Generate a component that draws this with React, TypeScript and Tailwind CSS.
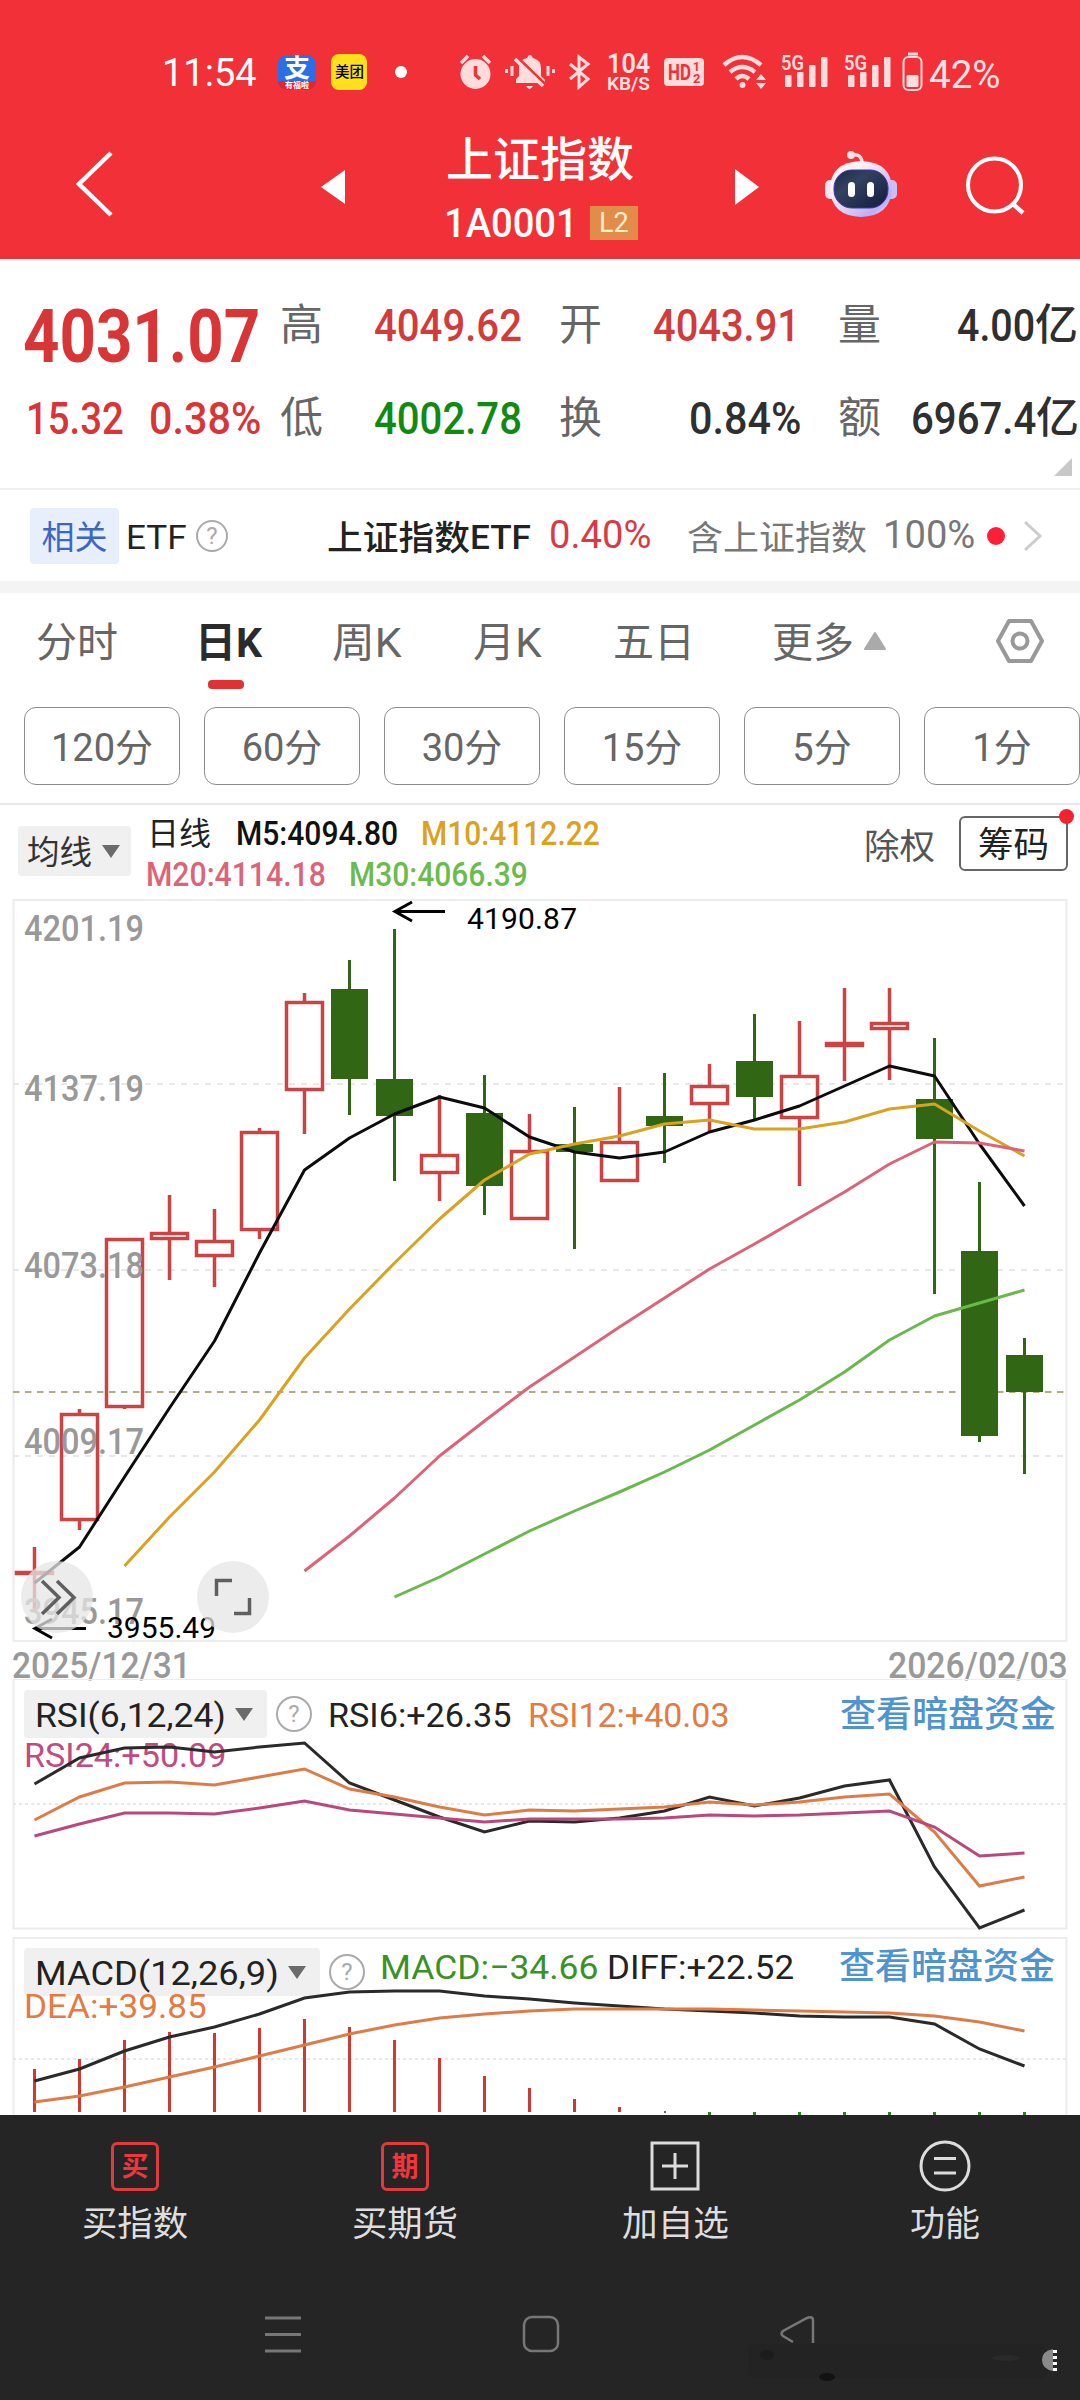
import React, { useLayoutEffect, useRef, useState } from "react";
import clsx from "clsx";

interface FitProps {
  w: number;
  className?: string;
  children: React.ReactNode;
}

// Squeezes a single line of text into a fixed width
const Fit: React.FC<FitProps> = ({ w, className, children }) => {
  const ref = useRef<HTMLSpanElement>(null);
  const [scale, setScale] = useState(1);

  useLayoutEffect(() => {
    if (ref.current) {
      setScale(w / ref.current.offsetWidth);
    }
  }, [w]);

  return (
    <span className={clsx("block shrink-0 leading-none", className)} style={{ width: w }}>
      <span
        ref={ref}
        className="inline-block origin-left whitespace-nowrap leading-none"
        style={{ transform: `scaleX(${scale})` }}
      >
        {children}
      </span>
    </span>
  );
};

const START_X = 34.5;
const STEP = 45;
const xAt = (i: number) => START_X + i * STEP;

const toPoints = (ys: number[], from = 0) =>
  ys.map((y, i) => `${xAt(i + from)},${y}`).join(" ");

type Candle = [up: boolean, high: number, top: number, bottom: number, low: number];

const candles: Candle[] = [
  [true, 1547, 1571, 1575, 1612],
  [true, 1409, 1413, 1521, 1530],
  [true, 1238, 1238, 1408, 1409],
  [true, 1195, 1232, 1240, 1280],
  [true, 1209, 1240, 1257, 1287],
  [true, 1128, 1131, 1231, 1239],
  [true, 993, 1001, 1091, 1134],
  [false, 960, 989, 1079, 1115],
  [false, 929, 1079, 1116, 1181],
  [true, 1095, 1154, 1174, 1201],
  [false, 1075, 1113, 1186, 1215],
  [true, 1114, 1150, 1220, 1220],
  [false, 1107, 1144, 1152, 1249],
  [true, 1087, 1141, 1182, 1182],
  [false, 1073, 1116, 1126, 1163],
  [true, 1064, 1085, 1105, 1131],
  [false, 1014, 1061, 1097, 1120],
  [true, 1021, 1075, 1119, 1186],
  [true, 988, 1042, 1047, 1081],
  [true, 988, 1022, 1030, 1080],
  [false, 1038, 1099, 1139, 1294],
  [false, 1182, 1251, 1436, 1442],
  [false, 1338, 1355, 1392, 1474],
];

const ma5 = [1583, 1547, 1477, 1408, 1341, 1253, 1170, 1138, 1114, 1097, 1108, 1137, 1152, 1158, 1152, 1132, 1120, 1106, 1086, 1066, 1076, 1144, 1206];
const ma10 = [1566, 1517, 1472, 1420, 1358, 1309, 1263, 1219, 1180, 1154, 1144, 1136, 1124, 1120, 1129, 1129, 1122, 1109, 1104, 1131, 1156];
const ma20 = [1571, 1536, 1498, 1456, 1421, 1387, 1357, 1327, 1298, 1269, 1244, 1218, 1192, 1164, 1142, 1143, 1151];
const ma30 = [1597, 1577, 1554, 1531, 1511, 1492, 1472, 1450, 1425, 1400, 1372, 1340, 1316, 1303, 1290];

const rsi6 = [1784, 1758, 1748, 1747, 1752, 1747, 1743, 1783, 1800, 1817, 1832, 1821, 1822, 1818, 1811, 1797, 1806, 1798, 1786, 1780, 1867, 1928, 1910];
const rsi12 = [1820, 1797, 1783, 1782, 1785, 1777, 1769, 1789, 1797, 1807, 1815, 1810, 1811, 1809, 1807, 1802, 1805, 1802, 1797, 1794, 1832, 1886, 1877];
const rsi24 = [1836, 1824, 1813, 1813, 1814, 1808, 1801, 1810, 1814, 1818, 1822, 1819, 1819, 1819, 1818, 1815, 1816, 1815, 1813, 1811, 1827, 1856, 1853];

const diff = [2081, 2069, 2051, 2037, 2027, 2014, 1998, 1992, 1991, 1991, 1996, 1999, 2003, 2006, 2009, 2011, 2013, 2016, 2017, 2017, 2024, 2049, 2066];
const dea = [2102, 2096, 2087, 2077, 2067, 2056, 2045, 2034, 2025, 2018, 2014, 2011, 2009, 2009, 2009, 2009, 2010, 2011, 2012, 2013, 2016, 2022, 2031];
const macdBars = [2069, 2059, 2040, 2032, 2033, 2028, 2019, 2027, 2040, 2058, 2076, 2088, 2099, 2107];

const priceLabels: [string, number][] = [
  ["4201.19", 941],
  ["4137.19", 1101],
  ["4073.18", 1278],
  ["4009.17", 1454],
  ["3945.17", 1624],
];

const Signal: React.FC<{ className?: string }> = ({ className }) => (
  <svg width="48" height="40" viewBox="0 0 48 40" className={className} fill="#ffdcdc">
    <text x="0" y="18" fontSize="21" fontWeight="600" textLength="23" lengthAdjust="spacingAndGlyphs">
      5G
    </text>
    <rect x="4" y="23" width="6.500" height="12" rx="1" />
    <rect x="16" y="20" width="6.500" height="15" rx="1" />
    <rect x="28" y="13" width="6.500" height="22" rx="1" />
    <rect x="40" y="5" width="6.500" height="30" rx="1" />
  </svg>
);

const StatusBar = () => (
  <div className="flex h-10 items-center text-[#ffe3e3]">
    <Fit w={95} className="ml-[162px] mt-[2px] text-[38px] text-white">11:54</Fit>
    <div className="ml-[21px] flex h-[35px] w-[38px] flex-col items-center overflow-hidden rounded-[9px] bg-[#2a6fe8] text-white">
      <span className="mt-px text-[26px] font-bold leading-[25px]">支</span>
      <span className="w-full bg-[#e5252b] text-center text-[8px] font-bold leading-[10px]">有福啦</span>
    </div>
    <div className="ml-[15px] flex size-9 items-center justify-center rounded-lg bg-[#ffe01a]">
      <Fit w={29} className="text-[15px] font-medium text-black">美团</Fit>
    </div>
    <div className="ml-[28px] size-3 rounded-full bg-white" />
    <svg width="32" height="36" viewBox="0 0 32 36" className="ml-[53px]" fill="#ffdcdc">
      <circle cx="15.500" cy="20" r="15" />
      <path d="M1 9 8 2M30 9 23 2" stroke="#ffdcdc" strokeWidth="3.500" />
      <path d="M15.500 12V21L20 25" stroke="#f23037" strokeWidth="3.500" fill="none" />
    </svg>
    <svg width="50" height="36" viewBox="0 0 50 36" className="ml-[13px]" fill="#ffdcdc">
      <path d="M11 29V25L14 22V13Q15 5 22 4Q23 1 25 1T28 4Q36 6 36 14V22L40 26V29ZM21 32H28Q26 35 24.500 35T21 32" />
      <path d="M11 2 41 31" stroke="#f23037" strokeWidth="3" />
      <path d="M10 5 38 32" stroke="#ffdcdc" strokeWidth="3.500" />
      <path d="M7 12V22M43 12V22M1.500 15V19M48.500 15V19" stroke="#ffdcdc" strokeWidth="3" />
    </svg>
    <svg width="24" height="36" viewBox="0 0 24 36" className="ml-[13px]" fill="none" stroke="#ffdcdc" strokeWidth="3">
      <path d="M2 10 20 25 11 33V3L20 10 2 25" />
    </svg>
    <div className="ml-[15px] flex flex-col gap-px font-semibold">
      <Fit w={43} className="text-[27px]">104</Fit>
      <Fit w={43} className="mt-[-5px] text-[19px]">KB/S</Fit>
    </div>
    <svg width="40" height="28" viewBox="0 0 40 28" className="ml-[14px]" fill="#f23037" fontWeight="700">
      <rect width="40" height="28" rx="4" fill="#ffdcdc" />
      <text x="4" y="22" fontSize="22" textLength="23" lengthAdjust="spacingAndGlyphs">HD</text>
      <text x="29" y="13" fontSize="12">1</text>
      <text x="29" y="25" fontSize="13">2</text>
    </svg>
    <svg width="46" height="36" viewBox="0 0 46 36" className="ml-[18px]" fill="none" stroke="#ffdcdc" strokeWidth="4.500">
      <path d="M2 11Q20-5 39 11M8 18Q20 8 33 18M14 25Q20 19 27 25" />
      <circle cx="20.500" cy="31" r="3" fill="#ffdcdc" stroke="none" />
      <path d="M39 20 44 26H34ZM39 35 44 29H34Z" fill="#ffdcdc" stroke="none" />
    </svg>
    <Signal className="ml-[13px]" />
    <Signal className="ml-[15px]" />
    <svg width="22" height="40" viewBox="0 0 22 40" className="ml-[10px]" fill="none" stroke="#ffdcdc" strokeWidth="2">
      <path d="M6 2H16" strokeWidth="3" />
      <rect x="1.500" y="5" width="18" height="33" rx="5" />
      <rect x="4.500" y="23" width="12" height="12" rx="1.500" fill="#ffdcdc" stroke="none" />
    </svg>
    <Fit w={72} className="ml-[5px] mt-[5px] text-[38px]">42%</Fit>
  </div>
);

const Robot = () => (
  <svg width="74" height="68" viewBox="0 0 74 68" className="ml-[65px]">
    <defs>
      <linearGradient id="shell" x1="0" y1="0" x2="1" y2="1">
        <stop offset="0.3" stopColor="#fff0f4" />
        <stop offset="0.8" stopColor="#bcaef5" />
        <stop offset="1" stopColor="#f4e6fb" />
      </linearGradient>
      <linearGradient id="visor" x1="0" y1="0" x2="1" y2="1">
        <stop offset="0" stopColor="#1c2747" />
        <stop offset="0.35" stopColor="#33415f" />
        <stop offset="1" stopColor="#131c3d" />
      </linearGradient>
    </defs>
    <path d="M28 5Q38 3 38 14" fill="none" stroke="#ffe2e4" strokeWidth="3.500" />
    <circle cx="27" cy="5" r="4" fill="#ffe2e4" />
    <rect x="1" y="30" width="12" height="19" rx="5" fill="#f8e3f0" />
    <rect x="61" y="30" width="12" height="19" rx="5" fill="#cdbdf2" />
    <path d="M37 11Q68 12 68 40 66 66 37 67 8 66 6 40 6 12 37 11Z" fill="url(#shell)" />
    <rect x="10" y="20" width="54" height="38" rx="18" fill="url(#visor)" stroke="#3c35b0" strokeWidth="1" />
    <rect x="24" y="32" width="7" height="15" rx="3.500" fill="#fff" />
    <rect x="43" y="32" width="7" height="15" rx="3.500" fill="#fff" />
  </svg>
);

const Header = () => (
  <header className="h-[259px] bg-[#f23037] pt-[52px]">
    <StatusBar />
    <div className="mt-8 flex h-[132px] items-center text-white">
      <svg width="40" height="66" viewBox="0 0 40 66" className="mb-3 ml-[74px]" fill="none" stroke="#fff" strokeWidth="4.500">
        <path d="M37 2 5 33 37 64" />
      </svg>
      <svg width="24" height="34" viewBox="0 0 24 34" className="mb-1.5 ml-[207px]">
        <path d="M24 0V34L0 17Z" fill="#fff" />
      </svg>
      <div className="ml-[75px] flex w-[240px] flex-col items-center">
        <div className="flex h-[66px] items-center">
          <Fit w={188} className="mt-[4px] text-[47px] font-medium">上证指数</Fit>
        </div>
        <div className="flex h-[66px] items-center">
          <Fit w={134} className="ml-[2px] text-[41px] font-medium">1A0001</Fit>
          <div className="ml-[12px] flex h-[34px] w-12 items-center justify-center bg-[#e28c4a] text-[#ffeecb]">
            <Fit w={30} className="text-[28px]">L2</Fit>
          </div>
        </div>
      </div>
      <svg width="24" height="36" viewBox="0 0 24 36" className="mb-1.5 ml-[75px]">
        <path d="M0 0V36L24 18Z" fill="#fff" />
      </svg>
      <div className="mb-3">
        <Robot />
      </div>
      <svg width="62" height="62" viewBox="0 0 62 62" className="mb-2 ml-[66px]" fill="none" stroke="#fff" strokeWidth="4">
        <circle cx="30.500" cy="30" r="26.500" />
        <path d="M49 49 59 58" strokeWidth="4.500" />
      </svg>
    </div>
  </header>
);

const Quote = () => (
  <section className="relative h-[231px] border-b-2 border-[#f0f0f0] font-medium">
    <div className="flex pl-[23px] pt-[41px]">
      <div className="w-[257px] text-[#d83536]">
        <Fit w={237} className="text-[74px] font-bold">4031.07</Fit>
        <div className="mt-[22px] flex text-[45px]">
          <Fit w={98} className="ml-[3px]">15.32</Fit>
          <Fit w={112} className="ml-[25px]">0.38%</Fit>
        </div>
      </div>
      <div className="flex flex-col gap-[49px] pt-[3px] text-[43px]">
        <div className="flex h-[44px] items-center text-[#2f2f2f]">
          <Fit w={43} className="font-normal text-[#666]">高</Fit>
          <Fit w={148} className="ml-[51px] text-[45px] text-[#d23b3b]">4049.62</Fit>
          <Fit w={43} className="ml-[37px] font-normal text-[#666]">开</Fit>
          <Fit w={147} className="ml-[51px] text-[45px] text-[#d23b3b]">4043.91</Fit>
          <Fit w={43} className="ml-[38px] font-normal text-[#666]">量</Fit>
          <Fit w={78} className="ml-[76px] text-[45px]">4.00</Fit>
          <Fit w={43}>亿</Fit>
        </div>
        <div className="flex h-[44px] items-center text-[#2f2f2f]">
          <Fit w={43} className="font-normal text-[#666]">低</Fit>
          <Fit w={148} className="ml-[51px] text-[45px] text-[#118a11]">4002.78</Fit>
          <Fit w={43} className="ml-[37px] font-normal text-[#666]">换</Fit>
          <Fit w={112} className="ml-[87px] text-[45px]">0.84%</Fit>
          <Fit w={43} className="ml-[37px] font-normal text-[#666]">额</Fit>
          <Fit w={125} className="ml-[30px] text-[45px]">6967.4</Fit>
          <Fit w={43}>亿</Fit>
        </div>
      </div>
    </div>
    <svg width="18" height="18" viewBox="0 0 18 18" className="absolute bottom-[12px] right-[8px]">
      <path d="M18 0V18H0Z" fill="#c8c8c8" />
    </svg>
  </section>
);

const Help: React.FC<{ size: number; className?: string }> = ({ size, className }) => (
  <div
    className={clsx("flex shrink-0 items-center justify-center rounded-full border-2 border-[#aaa] text-[24px] leading-none text-[#aaa]", className)}
    style={{ width: size, height: size }}
  >
    ?
  </div>
);

const EtfRow = () => (
  <section className="flex h-[91px] items-center text-[34px]">
    <div className="ml-[30px] mt-px flex h-[56px] w-[89px] items-center justify-center rounded bg-[#e7eefc] text-[#3d66c2]">
      <Fit w={66} className="mt-[2px] text-[33px]">相关</Fit>
    </div>
    <Fit w={61} className="ml-[7px] mt-[3px] text-[#222]">ETF</Fit>
    <Help size={32} className="ml-[9px] mt-[1px]" />
    <Fit w={143} className="ml-[99px] mt-[5px] font-medium text-[#222]">上证指数</Fit>
    <Fit w={61} className="mt-[3px] font-medium text-[#222]">ETF</Fit>
    <Fit w={103} className="ml-[18px] text-[39px] text-[#d93a45]">0.40%</Fit>
    <Fit w={180} className="ml-[35px] mt-[4px] text-[#777]">含上证指数</Fit>
    <Fit w={92} className="ml-[16px] text-[39px] text-[#777]">100%</Fit>
    <div className="ml-[12px] size-[18px] rounded-full bg-[#ff2037]" />
    <svg width="20" height="32" viewBox="0 0 20 32" className="ml-[18px]" fill="none" stroke="#ccc" strokeWidth="3">
      <path d="M2 2 17 16 2 30" />
    </svg>
  </section>
);

const periods = ["120分", "60分", "30分", "15分", "5分", "1分"];

const Tabs = () => (
  <section className="h-[212px] border-b-2 border-[#e8e8e8] text-[#666]">
    <div className="flex h-[114px] pt-[30px] text-[41px]">
      <Fit w={82} className="ml-[36px]">分时</Fit>
      <div className="ml-[77px] w-[67px]">
        <Fit w={67} className="font-bold text-[#2b2b2b]">日K</Fit>
        <div className="ml-[13px] mt-[16px] h-[9px] w-9 rounded bg-[#df3333]" />
      </div>
      <Fit w={70} className="ml-[70px]">周K</Fit>
      <Fit w={69} className="ml-[71px]">月K</Fit>
      <Fit w={82} className="ml-[71px]">五日</Fit>
      <Fit w={82} className="ml-[77px]">更多</Fit>
      <svg width="22" height="18" viewBox="0 0 22 18" className="ml-[10px] mt-[9px]">
        <path d="M11 1 21 17H1Z" fill="#aaa" stroke="#aaa" strokeLinejoin="round" strokeWidth="2" />
      </svg>
      <svg width="50" height="46" viewBox="0 0 50 46" className="ml-[109px] mt-[-5px]" fill="none" stroke="#999" strokeWidth="4" strokeLinejoin="round">
        <path d="M14 3H36L47 23 36 43H14L3 23Z" />
        <circle cx="25" cy="23" r="7.500" />
      </svg>
    </div>
    <div className="flex gap-6 pl-6">
      {periods.map((label) => (
        <div
          key={label}
          className="flex h-[78px] w-[156px] shrink-0 items-center justify-center rounded-xl border border-[#8c8c8c] pt-[3px] text-[38px] leading-none"
        >
          {label}
        </div>
      ))}
    </div>
  </section>
);

const Caret = ({ className }: { className?: string }) => (
  <svg width="18" height="13" viewBox="0 0 18 13" className={className}>
    <path d="M0 0H18L9 13Z" fill="#6b6b6b" />
  </svg>
);

const Legend = () => (
  <section className="flex h-[94px]">
    <div className="ml-[18px] mt-[21px] flex h-[50px] w-[113px] items-center rounded bg-[#f0f0f0] pl-[9px] text-[#333]">
      <Fit w={65} className="mt-[2px] text-[33px]">均线</Fit>
      <Caret className="ml-[10px]" />
    </div>
    <div className="ml-[15px] w-[600px] pt-[12px] text-[33px] font-medium">
      <div className="flex h-[32px] items-center">
        <Fit w={64} className="ml-px mt-px text-[32px] font-normal text-[#222]">日线</Fit>
        <Fit w={162} className="ml-[25px] text-[#111]">M5:4094.80</Fit>
        <Fit w={179} className="ml-[23px] text-[#dba21f]">M10:4112.22</Fit>
      </div>
      <div className="mt-[8px] flex h-[34px] items-center">
        <Fit w={180} className="text-[#dd6478]">M20:4114.18</Fit>
        <Fit w={179} className="ml-[23px] text-[#6cbb4e]">M30:4066.39</Fit>
      </div>
    </div>
    <Fit w={71} className="ml-[118px] mt-[25px] text-[35px] text-[#555]">除权</Fit>
    <div className="relative ml-[24px] mt-[11px] flex h-[55px] w-[109px] items-center justify-center rounded-md border-2 border-[#666] text-[#222]">
      <Fit w={71} className="mt-[3px] text-[35px]">筹码</Fit>
      <div className="absolute right-[-8px] top-[-9px] size-[15px] rounded-full bg-[#f5222d]" />
    </div>
  </section>
);

const KLineChart = () => (
  <svg width="1080" height="743" viewBox="0 899 1080 743" className="block" fill="none">
    <rect x="13.500" y="900" width="1053" height="741" stroke="#ececec" strokeWidth="2" />
    <g stroke="#e8e8e8" strokeWidth="2" strokeDasharray="6 6">
      <path d="M13 1084H1066M13 1270H1066M13 1456H1066" />
    </g>
    <path d="M13 1392H1066" stroke="#b3ab84" strokeWidth="2" strokeDasharray="6.500 5.500" />
    {candles.map(([up, high, top, bottom, low], i) => {
      const x = xAt(i);
      return up ? (
        <g key={i} stroke="#cb4343" strokeWidth="3.500">
          <path d={`M${x} ${high}V${top}M${x} ${bottom}V${low}`} />
          <rect x={x - 18} y={top + 1.5} width="36" height={Math.max(bottom - top - 3, 1)} />
        </g>
      ) : (
        <g key={i} fill="#306614">
          <rect x={x - 1.5} y={high} width="3" height={low - high} />
          <rect x={x - 18.5} y={top} width="37" height={bottom - top} />
        </g>
      );
    })}
    <g strokeWidth="3" strokeLinejoin="round">
      <polyline points={toPoints(ma5)} stroke="#0c0c0c" />
      <polyline points={toPoints(ma10, 2)} stroke="#d9a220" />
      <polyline points={toPoints(ma20, 6)} stroke="#dc6379" />
      <polyline points={toPoints(ma30, 8)} stroke="#69b94c" />
    </g>
    <g fill="#999" fontSize="36" fontWeight="500">
      {priceLabels.map(([label, y]) => (
        <text key={label} x="24" y={y} textLength="120" lengthAdjust="spacingAndGlyphs">
          {label}
        </text>
      ))}
    </g>
    <g stroke="#000" strokeWidth="3">
      <path d="M395 911.500H445M412 902 395 911.500 412 921" />
      <path d="M35 1628.500H86M52 1619 35 1628.500 52 1638" />
    </g>
    <g fill="#000" fontSize="30">
      <text x="467" y="929" textLength="110">4190.87</text>
      <text x="107" y="1638" textLength="109">3955.49</text>
    </g>
    <g fill="#e6e6e6" fillOpacity="0.75">
      <circle cx="57" cy="1597" r="36" />
      <circle cx="233" cy="1597" r="36" />
    </g>
    <g stroke="#5f5f5f" strokeWidth="3.500">
      <path d="M42 1581 59 1597.500 42 1614M57 1581 74 1597.500 57 1614" />
      <path d="M216.500 1596V1580.500H232M249.500 1598V1613.500H234" />
    </g>
  </svg>
);

interface ChipProps {
  w: number;
  label: string;
  chip: string;
  help: string;
}

const IndicatorChip: React.FC<ChipProps> = ({ w, label, chip, help }) => (
  <>
    <div className={clsx("flex h-12 items-center rounded bg-[#f0f0f0] pl-[11px] text-[#222]", chip)}>
      <Fit w={w} className="mt-[2px] text-[34px]">{label}</Fit>
      <Caret className="ml-[9px]" />
    </div>
    <Help size={36} className={help} />
  </>
);

const RsiPanel = () => (
  <section className="relative h-[258px] text-[34px]">
    <svg width="1080" height="258" viewBox="0 1679 1080 258" className="absolute inset-0" fill="none">
      <rect x="13.500" y="1679" width="1053" height="249.500" stroke="#ececec" strokeWidth="2" />
      <path d="M13 1804H1066" stroke="#e8e8e8" strokeWidth="2" strokeDasharray="3 3" />
    </svg>
    <div className="relative flex">
      <IndicatorChip w={191} label="RSI(6,12,24)" chip="ml-6 mt-[11px] w-[243px]" help="ml-[9px] mt-[17px]" />
      <Fit w={183} className="ml-[16px] mt-[19px] text-[#222]">RSI6:+26.35</Fit>
      <Fit w={202} className="ml-[17px] mt-[19px] text-[#e57a42]">RSI12:+40.03</Fit>
      <Fit w={216} className="ml-[110px] mt-[18px] text-[36px] font-medium text-[#4f93cf]">查看暗盘资金</Fit>
    </div>
    <Fit w={203} className="relative ml-6 text-[#c14b80]">RSI24:+50.09</Fit>
    <svg width="1080" height="258" viewBox="0 1679 1080 258" className="absolute inset-0" fill="none" strokeWidth="3">
      <polyline points={toPoints(rsi6)} stroke="#2a2a2a" />
      <polyline points={toPoints(rsi12)} stroke="#dd7c46" />
      <polyline points={toPoints(rsi24)} stroke="#b9487c" />
    </svg>
  </section>
);

const MacdPanel = () => (
  <section className="relative h-[178px] overflow-hidden text-[34px]">
    <svg width="1080" height="178" viewBox="0 1937 1080 178" className="absolute inset-0" fill="none">
      <rect x="13.500" y="1938" width="1053" height="249" stroke="#ececec" strokeWidth="2" />
      <path d="M13 2059H1066" stroke="#e8e8e8" strokeWidth="2" strokeDasharray="3 3" />
    </svg>
    <div className="relative flex">
      <IndicatorChip w={244} label="MACD(12,26,9)" chip="ml-6 mt-[11px] w-[296px]" help="ml-[9px] mt-[17px]" />
      <Fit w={219} className="ml-[15px] mt-[13px] text-[#3b9126]">MACD:−34.66</Fit>
      <Fit w={187} className="ml-[8px] mt-[13px] text-[#222]">DIFF:+22.52</Fit>
      <Fit w={216} className="ml-[45px] mt-[12px] text-[36px] font-medium text-[#4f93cf]">查看暗盘资金</Fit>
    </div>
    <Fit w={183} className="relative ml-6 mt-[-7px] text-[#e57a42]">DEA:+39.85</Fit>
    <svg width="1080" height="178" viewBox="0 1937 1080 178" className="absolute inset-0" fill="none" strokeWidth="3">
      {macdBars.map((y, i) => (
        <path key={i} d={`M${xAt(i)} ${y}V2112`} stroke="#cc3a33" />
      ))}
      <path d="M664 2112H666" stroke="#333" strokeWidth="1.500" />
      {Array.from({ length: 8 }, (_, i) => (
        <path key={i} d={`M${xAt(i + 15)} 2112V2118`} stroke="#2f8020" />
      ))}
      <polyline points={toPoints(diff)} stroke="#2a2a2a" />
      <polyline points={toPoints(dea)} stroke="#dd7c46" />
    </svg>
  </section>
);

const RedBadge = ({ char }: { char: string }) => (
  <div className="flex h-[49px] w-12 items-center justify-center rounded-md border-[3px] border-[#e03a3d] pt-[2px] text-[27px] font-bold leading-none text-[#f0353c]">
    {char}
  </div>
);

const actions = [
  { label: "买指数", w: 106, icon: <RedBadge char="买" /> },
  { label: "买期货", w: 106, icon: <RedBadge char="期" /> },
  {
    label: "加自选",
    w: 107,
    icon: (
      <svg width="50" height="50" viewBox="0 0 50 50" fill="none" stroke="#dcdcdc" strokeWidth="3">
        <path d="M2 2H48V48H2ZM25 12V38M12 25H38" />
      </svg>
    ),
  },
  {
    label: "功能",
    w: 70,
    icon: (
      <svg width="52" height="52" viewBox="0 0 52 52" fill="none" stroke="#dcdcdc" strokeWidth="3">
        <circle cx="26" cy="26" r="24" />
        <path d="M15 18.500H37M15 33H37" />
      </svg>
    ),
  },
];

const Footer = () => (
  <footer className="relative h-[285px] bg-[#252525]">
    <div className="grid grid-cols-4">
      {actions.map(({ label, w, icon }) => (
        <div key={label} className="flex flex-col items-center pt-[24px] text-[35px] text-[#dedede]">
          <div className="flex h-[54px] items-center">{icon}</div>
          <Fit w={w} className="mt-[14px]">{label}</Fit>
        </div>
      ))}
    </div>
    <div className="mt-[72px] flex pl-[264px]">
      <svg width="38" height="40" viewBox="0 0 38 40" fill="none" stroke="#777" strokeWidth="3">
        <path d="M1 4H37M1 20.500H37M1 37H37" />
      </svg>
      <svg width="38" height="40" viewBox="0 0 38 40" className="ml-[220px]" fill="none" stroke="#777" strokeWidth="2.500">
        <rect x="2" y="3" width="34" height="34" rx="8" />
      </svg>
      <svg width="38" height="40" viewBox="0 0 38 40" className="ml-[219px]" fill="none" stroke="#777" strokeWidth="2.500">
        <path d="M14 28 4 22Q1 20 4 17L28 4Q34 2 34 6V29" />
      </svg>
    </div>
    <svg width="320" height="50" viewBox="0 0 320 50" className="absolute bottom-[16px] right-[18px]">
      <rect x="6" y="10" width="300" height="34" rx="8" fill="#232323" />
      <ellipse cx="25" cy="21" rx="7" ry="5" fill="#1c1c1c" />
      <ellipse cx="85" cy="43" rx="8" ry="4" fill="#121212" />
      <ellipse cx="264" cy="24" rx="14" ry="3" fill="#2a2a2a" />
      <path d="M311 15Q300 17 300 26T311 37Z" fill="#8a8a8a" />
      <path d="M313 16V38" stroke="#fff" strokeWidth="4" strokeDasharray="3 3" />
    </svg>
  </footer>
);

const App: React.FC = () => {
  return (
    <div className="h-[2400px] w-[1080px] overflow-hidden bg-white font-[Roboto,'Noto_Sans_CJK_SC',sans-serif]">
      <Header />
      <Quote />
      <EtfRow />
      <div className="h-[12px] bg-[#f4f4f4]" />
      <Tabs />
      <Legend />
      <KLineChart />
      <div className="flex h-[37px] items-start justify-between pl-[12px] pr-[12px] pt-[6px] text-[36px] font-medium text-[#999]">
        <Fit w={179}>2025/12/31</Fit>
        <Fit w={180}>2026/02/03</Fit>
      </div>
      <RsiPanel />
      <MacdPanel />
      <Footer />
    </div>
  );
};

export default App;
